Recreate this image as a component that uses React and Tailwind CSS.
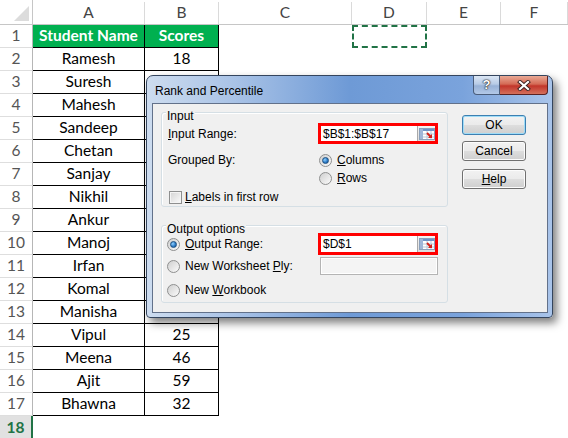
import React from 'react'

const NAMES = ['Ramesh', 'Suresh', 'Mahesh', 'Sandeep', 'Chetan', 'Sanjay', 'Nikhil', 'Ankur', 'Manoj', 'Irfan', 'Komal', 'Manisha', 'Vipul', 'Meena', 'Ajit', 'Bhawna']
const SCORES = { Ramesh: '18', Vipul: '25', Meena: '46', Ajit: '59', Bhawna: '32' }

function Radio({ checked }) {
  return (
    <span className="w-[13px] h-[13px] rounded-full border border-[#8e8f8f] bg-[linear-gradient(135deg,#cfcfcf,#fbfbfb)] flex items-center justify-center shrink-0">
      {checked && <span className="w-[7px] h-[7px] rounded-full border border-[#1c4f80] bg-[radial-gradient(circle_at_35%_35%,#8fd0ff,#2a78c4_60%,#1b5592)]" />}
    </span>
  )
}

function RangePicker() {
  return (
    <div className="w-[18px] h-full border-l border-[#a9a9a9] bg-[linear-gradient(180deg,#f4f4f4,#dcdcdc)] flex items-center justify-center">
      <svg width="16" height="12" viewBox="0 0 16 12">
        <rect x="0.5" y="0.5" width="15" height="11" fill="#fff" stroke="#8aa0bc" />
        <rect x="1" y="1" width="14" height="2" fill="#6f93c6" />
        <rect x="1" y="1" width="3" height="10" fill="#9fb6d8" />
        <path d="M4 6h11M4 9h11M8 3v8M12 3v8" stroke="#b8c6d8" strokeWidth="1" />
        <path d="M8 5l4 4" stroke="#d3201a" strokeWidth="2" />
        <path d="M13 10l-4 0l4-4z" fill="#d3201a" />
      </svg>
    </div>
  )
}

function Button({ children, focused }) {
  return (
    <div className={`h-[20px] rounded-[3px] border flex items-center justify-center bg-[linear-gradient(180deg,#f2f2f2_0%,#ebebeb_48%,#dddddd_52%,#cfcfcf_100%)] ${focused ? 'border-[#3c7fb1] shadow-[inset_0_0_0_1px_#9fdcf7]' : 'border-[#707070] shadow-[inset_0_0_0_1px_#fcfcfc]'}`}>
      {children}
    </div>
  )
}

function Dialog() {
  return (
    <div className="absolute left-[146px] top-[75px] w-[407px] h-[243px] rounded-t-[7px] rounded-b-[4px] border border-[#34455e] bg-[linear-gradient(90deg,#cddcef_0%,#a8c2e6_22%,#6e9ad6_50%,#7aa3dc_78%,#a9c4ea_100%)] shadow-[4px_5px_8px_rgba(0,0,0,0.5)] flex flex-col [font-family:'Liberation_Sans',Arial,sans-serif] text-[12px] text-black">
      {/* title bar */}
      <div className="relative h-[27px] flex items-center pl-[8px] pt-[2px]">
        <span>Rank and Percentile</span>
        <div className="absolute right-[4px] top-0 flex">
          <div className="w-[27px] h-[19px] border border-[#4a5d7b] border-t-0 rounded-bl-[4px] bg-[linear-gradient(180deg,#dbe6f4_0%,#b7cbe6_45%,#97b1d6_55%,#b3c9e8_100%)] flex items-center justify-center font-bold text-[13px] text-white [text-shadow:0_0_1px_#222,0_0_1px_#222,0_0_2px_#333]">?</div>
          <div className="w-[48px] h-[19px] border border-[#5a2222] border-t-0 border-l-0 rounded-br-[4px] bg-[linear-gradient(180deg,#e9a995_0%,#d46a55_45%,#c2352a_55%,#d4705c_100%)] flex items-center justify-center">
            <svg width="14" height="11" viewBox="0 0 14 11">
              <path d="M3 2l8 7M11 2l-8 7" stroke="#3a2020" strokeWidth="4" strokeLinecap="square" />
              <path d="M3 2l8 7M11 2l-8 7" stroke="#fff" strokeWidth="2.2" strokeLinecap="square" />
            </svg>
          </div>
        </div>
      </div>

      {/* content */}
      <div className="flex-1 ml-[5px] mr-[4px] mb-[4px] bg-[#f0f0f0] border border-[#62718a] flex">
        <div className="ml-[8px] mt-[8px] w-[287px] flex flex-col gap-[18px]">
          {/* Input group */}
          <div className="relative h-[95px] border border-[#d5dfe5] rounded-[3px] shadow-[inset_1px_1px_0_#fff] pl-[6px] pt-[10px]">
            <span className="absolute -top-[4px] left-[4px] px-[1px] bg-[#f0f0f0] leading-[14px]">Input</span>
            <div className="flex items-center h-[21px]">
              <span className="w-[150px]"><u>I</u>nput Range:</span>
              <div className="w-[120px] h-[21px] border-[3px] border-[#ff0000] bg-white flex items-center">
                <span className="flex-1 pl-[2px] leading-[14px]">$B$1:$B$17</span>
                <RangePicker />
              </div>
            </div>
            <div className="flex mt-[7px]">
              <span className="w-[151px] h-[18px] flex items-center">Grouped By:</span>
              <div className="flex flex-col">
                <div className="h-[18px] flex items-center gap-[5px]"><Radio checked /><span><u>C</u>olumns</span></div>
                <div className="h-[18px] flex items-center gap-[5px]"><Radio /><span><u>R</u>ows</span></div>
              </div>
            </div>
            <div className="h-[18px] mt-[1px] ml-[1px] flex items-center gap-[3px]">
              <span className="w-[13px] h-[13px] border border-[#8e8f8f] bg-[linear-gradient(135deg,#d4d4d4,#fbfbfb)] shadow-[inset_0_0_0_1px_#f4f4f4]" />
              <span><u>L</u>abels in first row</span>
            </div>
          </div>

          {/* Output group */}
          <div className="relative h-[78px] border border-[#d5dfe5] rounded-[3px] shadow-[inset_1px_1px_0_#fff] pl-[5px] pt-[7px]">
            <span className="absolute -top-[4px] left-[4px] px-[1px] bg-[#f0f0f0] leading-[14px]">Output options</span>
            <div className="flex items-center h-[22px]">
              <div className="w-[151px] flex items-center gap-[5px]"><Radio checked /><span><u>O</u>utput Range:</span></div>
              <div className="w-[120px] h-[22px] border-[3px] border-[#ff0000] bg-white flex items-center">
                <span className="flex-1 pl-[2px] leading-[14px]">$D$1</span>
                <RangePicker />
              </div>
            </div>
            <div className="flex items-center h-[18px] mt-[2px]">
              <div className="w-[153px] flex items-center gap-[5px]"><Radio /><span>New Worksheet <u>P</u>ly:</span></div>
              <div className="w-[118px] h-[18px] border border-[#b4b4b4] bg-[#f4f4f4] shadow-[inset_0_0_0_1px_#fff]" />
            </div>
            <div className="flex items-center h-[18px] mt-[6px] gap-[5px]"><Radio /><span>New <u>W</u>orkbook</span></div>
          </div>
        </div>

        {/* buttons */}
        <div className="ml-[14px] mt-[11px] w-[64px] flex flex-col">
          <Button focused>OK</Button>
          <div className="mt-[6px]"><Button>Cancel</Button></div>
          <div className="mt-[8px]"><Button><span><u>H</u>elp</span></Button></div>
        </div>
      </div>
    </div>
  )
}

export default function App() {
  const rows = [['Student Name', 'Scores'], ...NAMES.map(n => [n, SCORES[n] || ''])]

  return (
    <div className="relative w-[568px] h-[438px] overflow-hidden bg-white [font-family:Lato,'Liberation_Sans',sans-serif] text-[15.5px] text-black">
      {/* column headers */}
      <div className="flex h-[25px] border-b border-[#c6c6c6]">
        <div className="w-[33px] border-r border-[#c6c6c6]">
          <svg width="32" height="24" viewBox="0 0 32 24">
            <polygon points="14,21 29,21 29,6" fill="#dcdcdc" />
          </svg>
        </div>
        {[['A', 'w-[112px]'], ['B', 'w-[74px]'], ['C', 'w-[133px]'], ['D', 'w-[75px]'], ['E', 'w-[74px]'], ['F', 'flex-1']].map(([l, w]) => (
          <div key={l} className={`${w} flex items-end`}>
            <div className="w-full h-[22px] border-r border-[#dadada] flex items-center justify-center text-[#444]">{l}</div>
          </div>
        ))}
      </div>

      {rows.map(([name, score], i) => (
        <div key={i} className="flex h-[23px]">
          <div className="w-[33px] border-r border-b border-r-[#b6b6b6] border-b-[#dedede] flex items-center justify-center text-[#555]">{i + 1}</div>
          <div className={`w-[112px] border-r border-b border-black flex items-center justify-center ${i === 0 ? 'bg-[#00b050] text-white font-bold' : ''}`}>{name}</div>
          <div className={`w-[74px] border-r border-b border-black flex items-center justify-center ${i === 0 ? 'bg-[#00b050] text-white font-bold' : ''}`}>{score}</div>
          <div className="w-[133px]" />
          <div className="w-[75px]">
            {i === 0 && <div className="h-full border-2 border-dashed border-[#217346]" />}
          </div>
        </div>
      ))}

      <div className="flex h-[23px]">
        <div className="w-[33px] border-r-2 border-r-[#217346] bg-[#e1e1e1] flex items-center justify-center text-[#217346] font-bold">18</div>
      </div>

      <Dialog />
    </div>
  )
}
